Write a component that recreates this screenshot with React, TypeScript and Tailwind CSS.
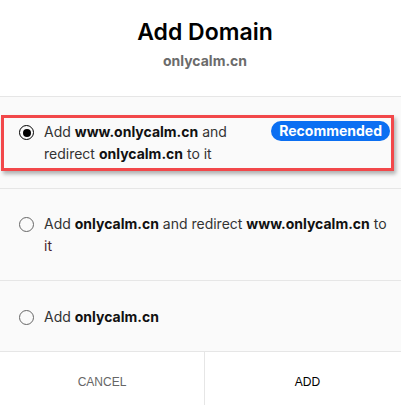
import React from "react";

function Radio({ checked }: { checked?: boolean }) {
  return checked ? (
    <span className="mt-[4px] flex h-[15px] w-[15px] shrink-0 items-center justify-center rounded-full border-[1.5px] border-black">
      <span className="h-[8px] w-[8px] rounded-full bg-black" />
    </span>
  ) : (
    <span className="mt-[4px] h-[15px] w-[15px] shrink-0 rounded-full border border-[#666]" />
  );
}

export default function App() {
  return (
    <div className="relative h-[405px] w-[401px] overflow-hidden bg-white">
      <div
        className="flex w-[410px] flex-col text-[#333]"
        style={{ fontFamily: "Inter, 'Noto Sans', sans-serif" }}
      >
        <div className="flex h-[97px] shrink-0 flex-col items-center border-b border-[#e6e6e6] pt-[16px]">
          <div className="text-[23px] font-semibold leading-[32px] text-black">Add Domain</div>
          <div className="mt-[3px] text-[14px] font-bold leading-[20px] text-[#6b6b6b]">onlycalm.cn</div>
        </div>

        <div className="relative flex shrink-0 items-start border-b border-[#e6e6e6] bg-[#fafafa] pb-[23px] pl-[19px] pr-[20px] pt-[24px]">
          <Radio checked />
          <div className="ml-[10px] w-[200px] text-[14px] leading-[22px]">
            Add <b className="font-bold text-[#111]">www.onlycalm.cn</b> and redirect{" "}
            <b className="font-bold text-[#111]">onlycalm.cn</b> to it
          </div>
          <div className="ml-auto rounded-full bg-[#0b6ff2] px-[8px] text-[14px] font-bold leading-[20px] text-white">
            Recommended
          </div>
          <span className="pointer-events-none absolute left-[1px] top-[18px] h-[56px] w-[393px] border-[3px] border-[#f2484a] shadow-[2px_3px_4px_rgba(0,0,0,0.3)]" />
        </div>

        <div className="flex shrink-0 items-start border-b border-[#e6e6e6] bg-[#fafafa] pb-[23px] pl-[19px] pr-[20px] pt-[24px]">
          <Radio />
          <div className="ml-[10px] w-[346px] text-[14px] leading-[22px]">
            Add <b className="font-bold text-[#111]">onlycalm.cn</b> and redirect{" "}
            <b className="font-bold text-[#111]">www.onlycalm.cn</b> to <span className="text-[#4a1f2e]">it</span>
          </div>
        </div>

        <div className="flex shrink-0 items-start border-b border-[#e6e6e6] bg-[#fafafa] pb-[23px] pl-[19px] pr-[20px] pt-[25px]">
          <Radio />
          <div className="ml-[10px] text-[14px] leading-[22px]">
            Add <b className="font-bold text-[#111]">onlycalm.cn</b>
          </div>
        </div>

        <div className="flex h-[60px] shrink-0" style={{ fontFamily: "'Liberation Sans', Arial, sans-serif" }}>
          <div className="flex w-[205px] items-center justify-center border-r border-[#e6e6e6] text-[12px] text-[#666]">
            CANCEL
          </div>
          <div className="flex flex-1 items-center justify-center text-[12px] text-black">ADD</div>
        </div>
      </div>
    </div>
  );
}
